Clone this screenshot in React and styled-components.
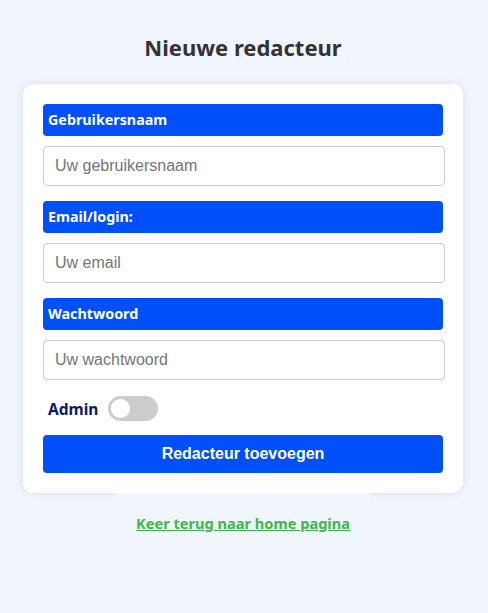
import React, { useState } from "react";
import styled, { createGlobalStyle } from "styled-components";

const GlobalStyle = createGlobalStyle`
  html, body {
    margin: 0;
    padding: 0;
    background: #f0f5fe;
  }
  body {
    font-family: "Noto Sans", "Lato", sans-serif;
  }
`;

const Page = styled.div`
  min-height: 613px;
  display: flex;
  flex-direction: column;
  align-items: center;
  padding: 32px 2px 0 0;
  box-sizing: border-box;
`;

const Title = styled.h1`
  margin: 0 0 22px;
  font-size: 22px;
  line-height: 30px;
  font-weight: 700;
  color: #333;
`;

const Card = styled.form`
  width: 440px;
  box-sizing: border-box;
  padding: 20px;
  background: #fff;
  border-radius: 10px;
  box-shadow: 0 0 8px rgba(40, 60, 120, 0.12);
  display: flex;
  flex-direction: column;
`;

const Label = styled.label`
  display: block;
  height: 32px;
  line-height: 32px;
  padding: 0 5px;
  background: #004ff9;
  color: #fff;
  font-size: 14.3px;
  font-weight: 700;
  border-radius: 4px;
  margin-bottom: 10px;
`;

const Input = styled.input`
  width: 402px;
  height: 40px;
  box-sizing: border-box;
  padding: 0 11px;
  border: 1px solid #ccc;
  border-radius: 4px;
  font-family: "Liberation Sans", Arial, sans-serif;
  font-size: 16px;
  color: #333;
  margin-bottom: 15px;
  outline: none;
  &::placeholder {
    color: #757575;
  }
`;

const AdminRow = styled.div`
  display: flex;
  align-items: center;
  gap: 10px;
  padding-left: 5px;
  margin: 1px 0 14px;
`;

const AdminText = styled.span`
  font-size: 15.5px;
  font-weight: 700;
  color: #0a1a6b;
`;

const Toggle = styled.button`
  width: 50px;
  height: 25px;
  border: none;
  border-radius: 13px;
  background: ${(p) => (p.$on ? "#004ff9" : "#ccc")};
  position: relative;
  padding: 0;
  cursor: pointer;
  &::after {
    content: "";
    position: absolute;
    top: 3px;
    left: ${(p) => (p.$on ? "28px" : "3px")};
    width: 19px;
    height: 19px;
    border-radius: 50%;
    background: #fff;
  }
`;

const Submit = styled.button`
  height: 38px;
  border: none;
  border-radius: 4px;
  background: #004ff9;
  color: #fff;
  font-family: "Liberation Sans", Arial, sans-serif;
  font-size: 16px;
  font-weight: 700;
  cursor: pointer;
`;

const LinkWrap = styled.div`
  position: relative;
  width: 256px;
  background: #f0f5fe;
  text-align: center;
  padding-top: 19px;
`;

const BackLink = styled.a`
  color: #3cb94a;
  font-size: 14.6px;
  font-weight: 700;
  text-decoration: underline;
`;

export default function App() {
  const [admin, setAdmin] = useState(false);
  return (
    <>
      <GlobalStyle />
      <Page>
        <Title>Nieuwe redacteur</Title>
        <Card onSubmit={(e) => e.preventDefault()}>
          <Label>Gebruikersnaam</Label>
          <Input placeholder="Uw gebruikersnaam" />
          <Label>Email/login:</Label>
          <Input placeholder="Uw email" />
          <Label>Wachtwoord</Label>
          <Input type="password" placeholder="Uw wachtwoord" />
          <AdminRow>
            <AdminText>Admin</AdminText>
            <Toggle type="button" $on={admin} onClick={() => setAdmin(!admin)} />
          </AdminRow>
          <Submit type="submit">Redacteur toevoegen</Submit>
        </Card>
        <LinkWrap>
          <BackLink href="#">Keer terug naar home pagina</BackLink>
        </LinkWrap>
      </Page>
    </>
  );
}
